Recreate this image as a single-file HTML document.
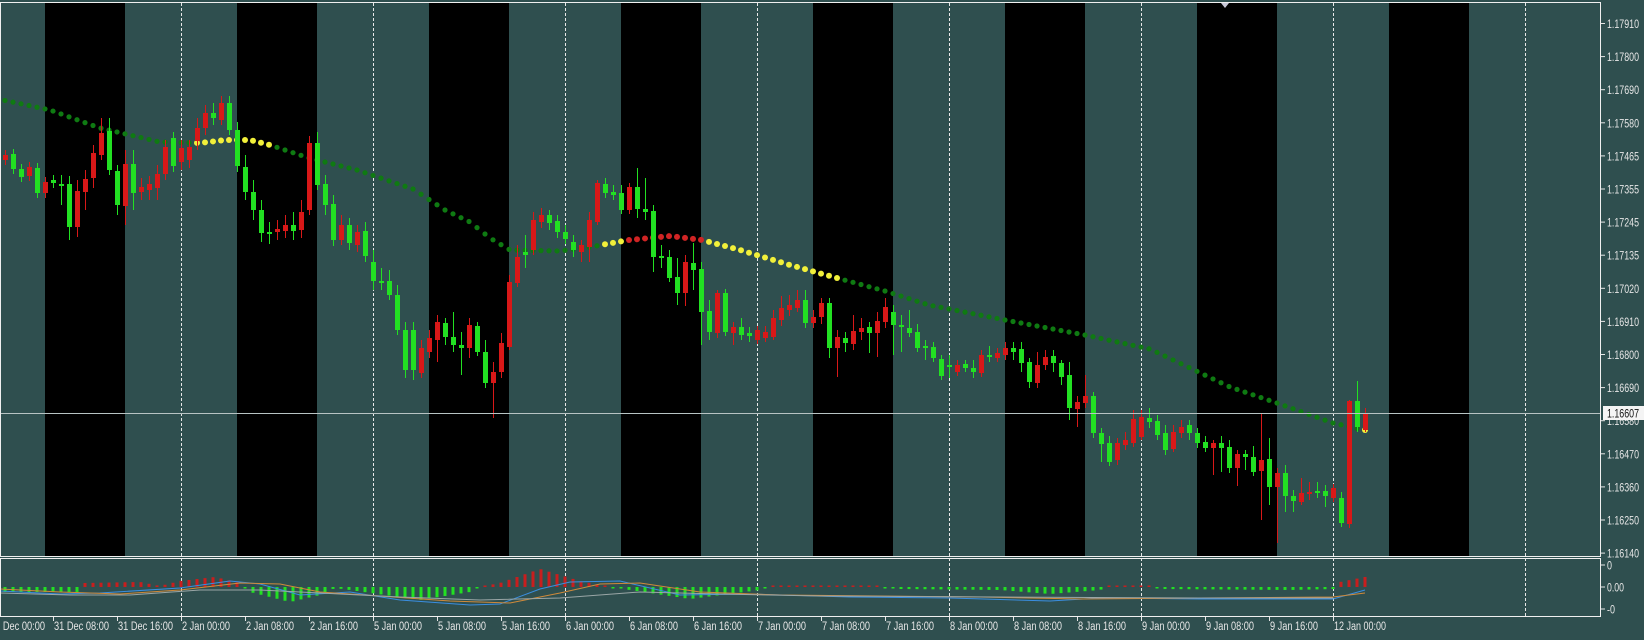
<!DOCTYPE html>
<html><head><meta charset="utf-8">
<style>
html,body{margin:0;padding:0;background:#2f4f4f;}
body{width:1644px;height:635px;overflow:hidden;}
svg text{font-family:"Liberation Sans",sans-serif;font-size:11.5px;fill:#e6e6e6;}
</style></head>
<body>
<svg id="s" width="1644" height="635" xmlns="http://www.w3.org/2000/svg">
<rect width="1644" height="635" fill="#2f4f4f"/>
<g id="bands"></g>
<g id="grid"></g>
<g id="ma"></g>
<g id="cand"></g>
<g id="ind"></g>
<line x1="0" y1="413.5" x2="1600" y2="413.5" stroke="#b8c4c4" stroke-width="1"/>
<rect x="0.5" y="2.5" width="1600" height="554" fill="none" stroke="#f0f0f0" stroke-width="1"/>
<rect x="0.5" y="558.5" width="1600" height="58" fill="none" stroke="#f0f0f0" stroke-width="1"/>
<polygon points="1221,3 1229,3 1225,8" fill="#c8c8d8"/>
<g id="axis"></g>
<rect x="1603" y="406" width="41" height="14" fill="#f4f4f4"/>
<text x="1607" y="417.5" textLength="32" lengthAdjust="spacingAndGlyphs" style="fill:#111">1.16607</text>
</svg>
<script>
const NS="http://www.w3.org/2000/svg";
function el(p,t,a){const e=document.createElementNS(NS,t);for(const k in a)e.setAttribute(k,a[k]);document.getElementById(p).appendChild(e);return e;}
for(let i=0;i<8;i++){el('bands','rect',{x:45+192*i,y:3,width:80,height:553,fill:'#000'});}
for(let i=0;i<8;i++){let x=181+192*i+0.5;el('grid','line',{x1:x,y1:3,x2:x,y2:616,stroke:'#e8e8e8','stroke-dasharray':'3,2','stroke-width':1});}
const labs=["1.17910","1.17800","1.17690","1.17580","1.17465","1.17355","1.17245","1.17135","1.17020","1.16910","1.16800","1.16690","1.16580","1.16470","1.16360","1.16250","1.16140"];
labs.forEach((l,k)=>{let y=23.5+33.1*k;el('axis','line',{x1:1601,y1:y,x2:1605,y2:y,stroke:'#e6e6e6'});let t=el('axis','text',{x:1607,y:y+4.5,textLength:32,lengthAdjust:'spacingAndGlyphs'});t.textContent=l;});
[["0",565,5],["0.00",587,17],["-0",609,8]].forEach(a=>{el('axis','line',{x1:1601,y1:a[1],x2:1605,y2:a[1],stroke:'#e6e6e6'});let t=el('axis','text',{x:1607,y:a[1]+4.5,textLength:a[2],lengthAdjust:'spacingAndGlyphs'});t.textContent=a[0];});
const tl=["31 Dec 00:00","31 Dec 08:00","31 Dec 16:00","2 Jan 00:00","2 Jan 08:00","2 Jan 16:00","5 Jan 00:00","5 Jan 08:00","5 Jan 16:00","6 Jan 00:00","6 Jan 08:00","6 Jan 16:00","7 Jan 00:00","7 Jan 08:00","7 Jan 16:00","8 Jan 00:00","8 Jan 08:00","8 Jan 16:00","9 Jan 00:00","9 Jan 08:00","9 Jan 16:00","12 Jan 00:00"];
tl.forEach((l,k)=>{let x=-11+64*k;el('axis','line',{x1:x+.5,y1:617,x2:x+.5,y2:621,stroke:'#e6e6e6'});let w=l.startsWith('3')?55:(l.startsWith('12')?52:48);let t=el('axis','text',{x:x+1,y:630,textLength:w,lengthAdjust:'spacingAndGlyphs'});t.textContent=l;});
const C=[
[5,'r',155,160],[13,'g',154,169],[21,'g',169,177],[29,'r',167,176],[37,'g',168,193],[45,'r',182,193],[53,'g',180,183],[61,'g',184,186,175,205],[69,'g',184,227,176,240],[77,'r',191,227,180,237],[85,'r',179,192,170,210],[93,'r',153,178,145,188],[101,'r',133,155,118,160],[109,'g',131,170,118,175],[117,'g',171,205,165,215],[125,'r',164,206,150,225],[133,'g',164,193,150,210],[141,'r',187,192,178,200],[149,'r',184,190,176,200],[157,'r',174,188,165,200],[165,'r',147,174,140,180],[173,'g',138,166,132,172],[181,'r',148,162,140,170],[189,'r',147,160,140,168],[197,'r',128,141,118,150],[205,'r',113,128,105,135],[213,'g',113,118,103,125],[221,'r',103,120,96,125],[229,'g',103,130,96,135],[237,'g',130,166,122,172],[245,'g',167,192,155,200],[253,'g',192,210,180,220],[261,'g',210,233,200,242],[269,'g',232,233,222,244],[277,'r',229,232,220,240],[285,'r',225,231,215,238],[293,'g',225,231,212,240],[301,'r',212,230,200,238],[309,'r',143,210,136,215],[317,'g',143,185,132,190],[325,'g',184,205,175,215],[333,'g',204,240,195,246],[341,'r',225,240,215,245],[349,'g',225,243,218,250],[357,'r',232,245,225,252],[365,'g',231,256,222,262],[373,'g',262,281,250,290],[381,'g',281,283,268,290],[389,'g',281,295,270,300],[397,'g',295,330,285,335],[405,'g',330,370,322,378],
[413,'g',330,370,322,380],[421,'r',348,373,340,378],[429,'r',338,352,330,358],[437,'r',322,340,315,362],[445,'g',323,337,318,345],[453,'g',337,345,312,352],[461,'g',345,348,332,375],[469,'r',325,348,318,358],[477,'g',326,352,322,356],[485,'g',352,383,340,388],[493,'r',372,383,362,418],[501,'r',343,372,333,378],[509,'r',282,347,275,350],[517,'r',257,283,245,287],[525,'g',252,255,235,268],[533,'r',220,250,212,255],[541,'r',215,222,208,228],[549,'g',215,223,210,230],[557,'g',221,232,215,238],[565,'g',232,239,225,244],[573,'g',242,250,235,257],[581,'r',245,252,240,262],[589,'r',220,247,212,262],[597,'r',183,222,180,225],[605,'g',184,193,178,198],[613,'g',192,195,185,200],[621,'g',193,210,185,214],[629,'r',187,210,183,214],[637,'g',187,209,168,218],[645,'g',209,212,178,220],[653,'g',211,257,205,272],[661,'g',256,258,245,268],[669,'g',257,278,250,282],[677,'g',277,293,258,305],[685,'r',262,293,255,306],[693,'g',263,270,243,290],[701,'g',269,312,262,345],[709,'g',311,332,300,340],[717,'r',293,333,290,338],[725,'g',293,332,289,336],[733,'r',327,333,322,345],[741,'g',327,335,318,340],[749,'g',333,336,327,342],[757,'r',330,340,326,344],[765,'r',332,338,326,342],[773,'r',318,337,310,340],[781,'r',308,320,296,326],[789,'r',305,310,295,316],[797,'r',300,308,290,312],[805,'g',300,323,290,328],[813,'r',317,323,310,328],[821,'r',303,317,298,324],
[829,'g',303,348,298,358],[837,'r',337,348,330,377],[845,'g',338,343,332,352],[853,'r',331,344,315,350],[861,'r',328,332,318,340],[869,'g',327,333,322,353],[877,'r',321,333,312,357],[885,'r',307,322,298,328],[893,'g',312,325,305,355],[901,'g',325,327,315,352],[909,'g',328,333,310,337],[917,'g',332,348,324,352],[925,'g',346,348,340,360],[933,'g',347,358,342,362],[941,'g',359,376,355,380],[949,'g',365,366,355,378],[957,'r',365,372,360,376],[965,'g',364,368,360,372],[973,'g',368,372,360,378],[981,'r',355,373,350,377],[989,'g',355,357,346,362],[997,'r',353,358,348,362],[1005,'r',348,355,342,360],[1013,'g',348,352,342,360],[1021,'g',349,363,342,372],[1029,'g',362,382,358,388],[1037,'r',365,383,352,388],[1045,'r',357,365,350,370],[1053,'g',356,363,350,372],[1061,'g',363,377,360,385],[1069,'g',375,408,362,420],[1077,'r',402,409,396,427],[1085,'r',396,403,375,408],[1093,'g',396,433,392,438],[1101,'g',433,444,428,462],[1109,'g',443,462,436,466],[1117,'r',443,460,438,465],[1125,'r',440,445,432,450],[1133,'r',419,443,410,447],[1141,'r',417,437,410,440],[1149,'g',418,422,408,428],[1157,'g',421,435,415,440],[1165,'g',433,450,425,455],[1173,'r',432,449,425,452],[1181,'r',427,433,420,438],[1189,'g',425,433,420,440],[1197,'g',433,443,428,448],[1205,'g',442,448,436,452],[1213,'r',443,448,440,475],[1221,'g',443,448,436,472],[1229,'g',447,468,440,473],[1237,'r',454,468,450,486],
[1245,'g',454,457,450,470],[1253,'g',457,472,446,476],[1261,'r',460,471,413,520],[1269,'g',459,487,438,505],[1277,'r',473,487,468,543],[1285,'g',473,496,465,512],[1293,'g',496,501,490,512],[1301,'r',493,502,478,505],[1309,'r',492,494,482,500],[1317,'g',491,493,482,498],[1325,'g',491,496,485,507],[1333,'r',488,498,484,502],[1341,'g',498,523,492,527],[1349,'r',401,524,400,528],[1357,'g',401,427,381,432],[1365,'r',414,430,408,432]
];
C.forEach(c=>{const col=c[1]=='g'?'#22e022':'#d81818';const wt=c[4]||c[2]-5,wb=c[5]||c[3]+5;
el('cand','line',{x1:c[0]+.5,y1:wt,x2:c[0]+.5,y2:wb,stroke:col,'stroke-width':1});
el('cand','rect',{x:c[0]-2,y:c[2],width:5,height:Math.max(2,c[3]-c[2]),fill:col});});
function interp(pts,x){for(let i=0;i<pts.length-1;i++){if(x>=pts[i][0]&&x<=pts[i+1][0]){const t=(x-pts[i][0])/(pts[i+1][0]-pts[i][0]);return pts[i][1]+t*(pts[i+1][1]-pts[i][1]);}}return pts[pts.length-1][1];}
const ma=[[3,100],[50,110],[100,128],[160,142],[200,143],[225,140],[250,140],[270,145],[309,158],[357,170],[413,189],[445,210],[470,222],[490,238],[510,250],[560,251],[590,247],[629,240],[670,236],[702,240],[740,250],[790,265],[837,278],[885,291],[929,305],[1005,320],[1085,335],[1150,349],[1230,387],[1277,403],[1333,423],[1365,430]];
for(let x=5;x<=1365;x+=8){let col='#0f7a12';let r=2.6;
if((x>=197&&x<=269)||(x>=598&&x<=622)||(x>=709&&x<=837)||x==1365){col='#f2f03a';r=3;}
else if(x>=629&&x<=702){col='#d02424';r=3;}
el('ma','circle',{cx:x,cy:interp(ma,x),r:r,fill:col});}
const hp=[[0,5],[80,5],[85,-4],[140,-5],[160,-1],[180,-6],[215,-10],[240,-4],[250,5],[290,15],[320,8],[335,1],[350,3],[420,13],[470,5],[480,0],[500,-4],[540,-18],[580,-6],[600,-2],[630,3],[690,12],[760,3],[770,-1],[870,-1],[900,2],[1000,3],[1050,7],[1100,3],[1110,-1],[1150,-1],[1160,2],[1290,3],[1335,2],[1340,-5],[1365,-10]];
for(let x=5;x<=1365;x+=8){let v=interp(hp,x);if(Math.abs(v)<1.5)v=v<0?-1.5:1.5;
if(v>0)el('ind','rect',{x:x-1.5,y:587,width:3,height:v,fill:'#22e022'});else el('ind','rect',{x:x-1.5,y:587+v,width:3,height:-v,fill:'#c81e1e'});}
function pl(pts,col){el('ind','polyline',{points:pts.map(p=>p.join(',')).join(' '),fill:'none',stroke:col,'stroke-width':1});}
pl([[0,591],[60,594],[100,593],[180,588],[230,581],[260,584],[300,595],[350,592],[400,600],[470,605],[500,604],[540,589],[570,582],[620,581],[680,595],[750,594],[850,597],[950,598],[1050,601],[1100,598],[1200,599],[1333,599],[1365,590]],'#3a8ee0');
pl([[0,589],[60,592],[120,594],[180,590],[240,583],[280,584],[320,592],[380,596],[450,601],[510,603],[560,593],[600,584],[640,583],[700,592],[780,595],[880,596],[980,597],[1080,599],[1200,598],[1333,597],[1365,593]],'#d08a3a');
pl([[0,593],[70,595],[130,595],[200,590],[260,590],[320,593],[400,597],[480,600],[560,598],[640,592],[720,594],[820,596],[1000,597],[1200,598],[1333,598]],'#9aa6a6');
</script>
</body></html>
